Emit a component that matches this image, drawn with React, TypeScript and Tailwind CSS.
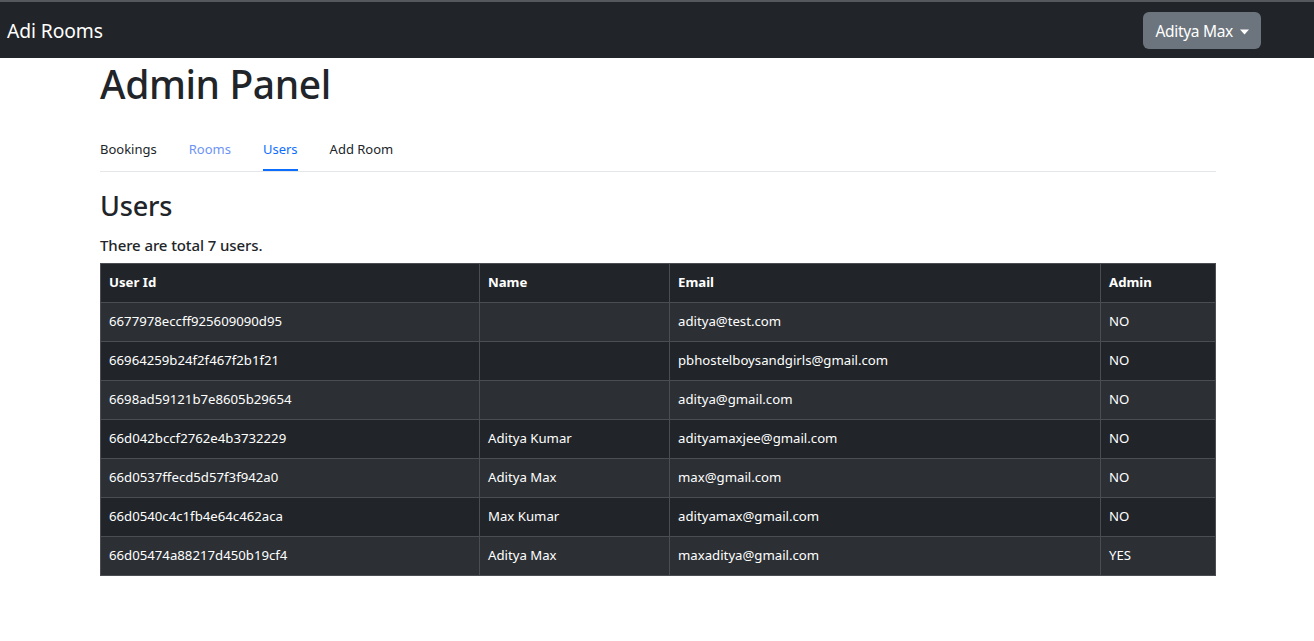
const users = [
  { id: '6677978eccff925609090d95', name: '', email: 'aditya@test.com', admin: 'NO' },
  { id: '66964259b24f2f467f2b1f21', name: '', email: 'pbhostelboysandgirls@gmail.com', admin: 'NO' },
  { id: '6698ad59121b7e8605b29654', name: '', email: 'aditya@gmail.com', admin: 'NO' },
  { id: '66d042bccf2762e4b3732229', name: 'Aditya Kumar', email: 'adityamaxjee@gmail.com', admin: 'NO' },
  { id: '66d0537ffecd5d57f3f942a0', name: 'Aditya Max', email: 'max@gmail.com', admin: 'NO' },
  { id: '66d0540c4c1fb4e64c462aca', name: 'Max Kumar', email: 'adityamax@gmail.com', admin: 'NO' },
  { id: '66d05474a88217d450b19cf4', name: 'Aditya Max', email: 'maxaditya@gmail.com', admin: 'YES' },
];

const tabs = [
  { label: 'Bookings', cls: 'text-[#212529]' },
  { label: 'Rooms', cls: 'text-[#6d94f5]' },
  { label: 'Users', cls: 'text-[#0d6efd] border-b-2 border-[#0d6efd]' },
  { label: 'Add Room', cls: 'text-[#212529]' },
];

export default function App() {
  return (
    <div className="min-h-[641px] bg-white font-['Noto_Sans',sans-serif] text-[#212529]">
      {/* navbar */}
      <nav className="h-[58px] bg-[#212529] border-t-2 border-[#55585c] flex items-center justify-between pl-[7px] pr-[53px]">
        <span className="text-white text-[19.3px] tracking-[-0.1px] mt-[3px]">Adi Rooms</span>
        <button className="h-[37px] mt-[1px] px-[12px] pt-[2px] rounded-[6px] bg-[#6c757d] text-white text-[15.5px] flex items-center gap-[5px] tracking-[-0.3px]">
          Aditya Max
          <svg width="9" height="6" viewBox="0 0 9 6" className="ml-[2px]">
            <path d="M0 0.5 L9 0.5 L4.5 5.5 Z" fill="white" />
          </svg>
        </button>
      </nav>

      <div className="w-[1116px] ml-[100px]">
        <h1 className="text-[39px] font-medium leading-[1.2] mt-[3px] tracking-[-0.4px]">Admin Panel</h1>

        <div className="mt-[32px] flex gap-[32px] border-b border-[#e4e6e8] text-[13px]">
          {tabs.map((t) => (
            <div key={t.label} className={`pb-[10px] ${t.cls}`}>{t.label}</div>
          ))}
        </div>

        <h2 className="text-[27px] font-medium leading-[1.2] mt-[18px] tracking-[-0.2px]">Users</h2>
        <p className="text-[15px] font-medium mt-[11px] mb-[7px] tracking-[-0.1px]">There are total 7 users.</p>

        <table className="w-full border-collapse text-[13.2px] text-white">
          <thead>
            <tr className="bg-[#212529] h-[39px]">
              <th className="w-[379px] text-left font-bold px-[8px] border border-[#4a4e53]">User Id</th>
              <th className="w-[190px] text-left font-bold px-[8px] border border-[#4a4e53]">Name</th>
              <th className="w-[431px] text-left font-bold px-[8px] border border-[#4a4e53]">Email</th>
              <th className="text-left font-bold px-[8px] border border-[#4a4e53]">Admin</th>
            </tr>
          </thead>
          <tbody>
            {users.map((u, i) => (
              <tr key={u.id} className={`h-[39px] ${i % 2 === 0 ? 'bg-[#2c3034]' : 'bg-[#212529]'}`}>
                <td className="px-[8px] border border-[#4a4e53]">{u.id}</td>
                <td className="px-[8px] border border-[#4a4e53]">{u.name}</td>
                <td className="px-[8px] border border-[#4a4e53]">{u.email}</td>
                <td className="px-[8px] border border-[#4a4e53]">{u.admin}</td>
              </tr>
            ))}
          </tbody>
        </table>
      </div>
    </div>
  );
}
